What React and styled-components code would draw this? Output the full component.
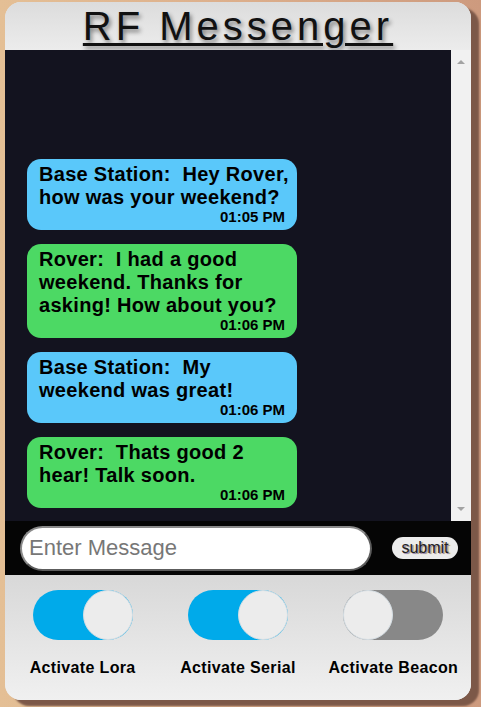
import React from "react";
import styled, { createGlobalStyle } from "styled-components";

const GlobalStyle = createGlobalStyle`
  html, body {
    margin: 0;
    padding: 0;
    height: 100%;
  }
  body {
    background: linear-gradient(90deg, #e4bf95 0%, #dcae8b 50%, #cd9a7e 100%);
    font-family: "Liberation Sans", Arial, sans-serif;
    overflow: hidden;
  }
`;

const Card = styled.div`
  width: 466px;
  height: 698px;
  margin: 2px 0 0 5px;
  border-radius: 16px;
  overflow: hidden;
  display: flex;
  flex-direction: column;
  background: #e6e6e6;
  box-shadow: 8px 6px 2px #7c5848;
`;

const Header = styled.div`
  height: 48px;
  flex-shrink: 0;
  background: linear-gradient(180deg, #dcdcdc, #ececec);
  text-align: center;
`;

const Title = styled.h1`
  margin: 0;
  font-size: 40px;
  line-height: 48px;
  font-weight: normal;
  letter-spacing: 4px;
  color: #111;
  text-decoration: underline;
  text-decoration-thickness: 3px;
  text-underline-offset: 3px;
  text-shadow: 2px 3px 4px rgba(0, 0, 0, 0.45);
`;

const ChatRow = styled.div`
  height: 471px;
  flex-shrink: 0;
  display: flex;
`;

const MessageList = styled.div`
  flex: 1;
  background: #13131f;
  display: flex;
  flex-direction: column;
  justify-content: flex-end;
  gap: 14px;
  padding: 0 0 13px 22px;
  overflow: hidden;
`;

const Bubble = styled.div`
  width: 270px;
  box-sizing: border-box;
  padding: 4px 12px 5px 12px;
  border-radius: 14px;
  background: ${(p) => (p.$from === "base" ? "#5ac8fa" : "#4cd964")};
  color: #000;
`;

const BubbleText = styled.div`
  margin-right: -8px;
  font-size: 20px;
  line-height: 23px;
  font-weight: bold;
  letter-spacing: 0.3px;
  white-space: pre-wrap;
`;

const Time = styled.div`
  font-size: 15px;
  line-height: 16px;
  font-weight: bold;
  text-align: right;
`;

const ScrollGutter = styled.div`
  width: 20px;
  background: #f1f1f1;
  display: flex;
  flex-direction: column;
  justify-content: space-between;
  align-items: center;
  padding: 10px 0 10px 0;
`;

const Arrow = styled.div`
  width: 0;
  height: 0;
  border-left: 4px solid transparent;
  border-right: 4px solid transparent;
  ${(p) =>
    p.$up
      ? "border-bottom: 4px solid #a3a3a3;"
      : "border-top: 4px solid #a3a3a3;"}
`;

const InputBar = styled.form`
  height: 54px;
  flex-shrink: 0;
  background: #050505;
  display: flex;
  align-items: center;
  padding: 0 13px 0 15px;
  gap: 20px;
`;

const MessageInput = styled.input`
  width: 352px;
  height: 45px;
  box-sizing: border-box;
  border-radius: 23px;
  border: 2px solid #8a8a8a;
  border-right-color: #5c5c5c;
  border-bottom-color: #5c5c5c;
  background: #fff;
  padding: 0 7px;
  font-family: "Liberation Sans", Arial, sans-serif;
  font-size: 22px;
  outline: none;

  &::placeholder {
    color: #777;
  }
`;

const SubmitButton = styled.button`
  width: 66px;
  height: 22px;
  padding: 0;
  border: none;
  border-radius: 11px;
  background: #ececec;
  font-family: "Liberation Sans", Arial, sans-serif;
  font-size: 16px;
  color: #222;
  text-shadow: 1px 1px 0 #9c8fb8, 2px 1px 1px #c9b97a;
`;

const Controls = styled.div`
  flex: 1;
  background: linear-gradient(180deg, #d8d8d8, #f0f0f0);
  display: grid;
  grid-template-columns: repeat(3, 1fr);
  padding-top: 15px;
`;

const ControlCell = styled.div`
  display: flex;
  flex-direction: column;
  align-items: center;
  gap: 18px;
`;

const Track = styled.div`
  width: 100px;
  height: 50px;
  border-radius: 25px;
  background: ${(p) => (p.$on ? "#00aaea" : "#888888")};
  display: flex;
  justify-content: ${(p) => (p.$on ? "flex-end" : "flex-start")};
`;

const Knob = styled.div`
  width: 50px;
  height: 50px;
  box-sizing: border-box;
  border-radius: 50%;
  background: #ececec;
  border: 1px solid #d4dde3;
`;

const Label = styled.div`
  font-size: 16px;
  line-height: 20px;
  font-weight: bold;
  letter-spacing: 0.35px;
  color: #000;
  white-space: nowrap;
`;

const messages = [
  { from: "base", text: "Base Station:  Hey Rover, how was your weekend?", time: "01:05 PM" },
  { from: "rover", text: "Rover:  I had a good weekend. Thanks for asking! How about you?", time: "01:06 PM" },
  { from: "base", text: "Base Station:  My weekend was great!", time: "01:06 PM" },
  { from: "rover", text: "Rover:  Thats good 2 hear! Talk soon.", time: "01:06 PM" },
];

const toggles = [
  { label: "Activate Lora", on: true },
  { label: "Activate Serial", on: true },
  { label: "Activate Beacon", on: false },
];

export default function App() {
  return (
    <>
      <GlobalStyle />
      <Card>
        <Header>
          <Title>RF Messenger</Title>
        </Header>
        <ChatRow>
          <MessageList>
            {messages.map((m, i) => (
              <Bubble key={i} $from={m.from}>
                <BubbleText>{m.text}</BubbleText>
                <Time>{m.time}</Time>
              </Bubble>
            ))}
          </MessageList>
          <ScrollGutter>
            <Arrow $up />
            <Arrow />
          </ScrollGutter>
        </ChatRow>
        <InputBar onSubmit={(e) => e.preventDefault()}>
          <MessageInput placeholder="Enter Message" />
          <SubmitButton type="submit">submit</SubmitButton>
        </InputBar>
        <Controls>
          {toggles.map((t) => (
            <ControlCell key={t.label}>
              <Track $on={t.on}>
                <Knob />
              </Track>
              <Label>{t.label}</Label>
            </ControlCell>
          ))}
        </Controls>
      </Card>
    </>
  );
}
